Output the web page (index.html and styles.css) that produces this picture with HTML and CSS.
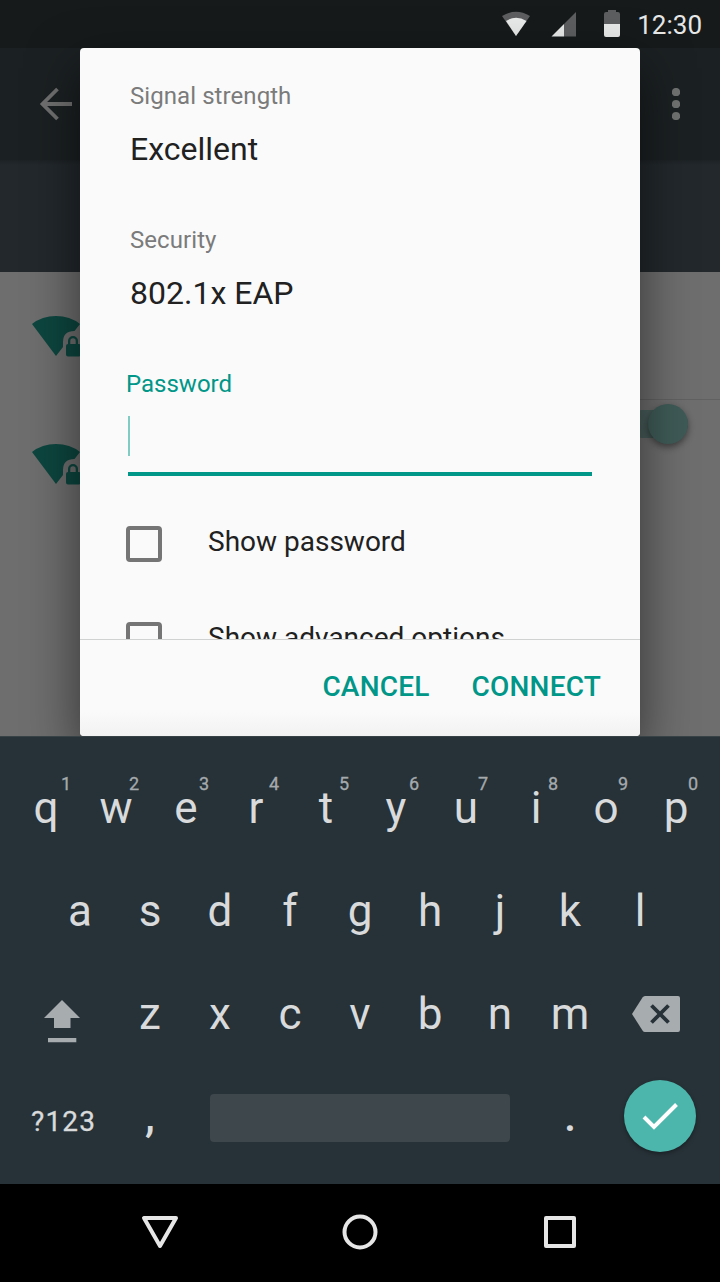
FILE: index.html
```html
<!DOCTYPE html>
<html lang="en">
<head>
<meta charset="utf-8">
<title>Wi-Fi</title>
<link rel="stylesheet" href="styles.css">
</head>
<body>
<div class="phone">
  <header class="status">
    <svg class="status-icons" width="136" height="32" viewBox="494 8 136 32">
      <path d="M502 16Q516 7.500 530 16L516 36Z" fill="#5c5e5f"/>
      <path d="M506 21Q516 14.500 526.500 21L516 36Z" fill="#e8e9e9"/>
      <path d="M564 24L576 12V36.500H564Z" fill="#5c5e5f"/>
      <path d="M564 24V36.500H551.500Z" fill="#e8e9e9"/>
      <path d="M608 10h8v2h2a2 2 0 0 1 2 2v10h-16V14a2 2 0 0 1 2-2h2Z" fill="#5c5e5f"/>
      <path d="M604 24h16v11a2 2 0 0 1-2 2h-12a2 2 0 0 1-2-2Z" fill="#e8e9e9"/>
    </svg>
    <span class="clock">12:30</span>
  </header>
  <main class="app">
    <div class="toolbar">
      <svg width="34" height="34" viewBox="39 87 34 34"><path d="M72 104H43M57.500 89L42.500 104L57.500 119" fill="none" stroke="#707070" stroke-width="3.800"/></svg>
      <svg width="8" height="32" viewBox="0 0 8 32" fill="#707272"><circle cx="4" cy="4" r="4.100"/><circle cx="4" cy="16" r="4.100"/><circle cx="4" cy="28" r="4.100"/></svg>
    </div>
    <div class="subheader"></div>
    <div class="networks">
      <div class="network">
        <svg width="52" height="42" viewBox="32 316 52 42" fill="#0d463f">
          <path d="M32 324Q42 316 56 316T80 324L74.500 331Q63 331 63 342V347L56 356Z"/>
          <path fill-rule="evenodd" d="M68 344V341a5 5 0 0 1 10 0V344h1a2 2 0 0 1 2 2v8.500a2 2 0 0 1-2 2H68a2 2 0 0 1-2-2V346a2 2 0 0 1 2-2ZM70.300 344h5.400V341a2.700 2.700 0 0 0-5.400 0Z"/>
        </svg>
      </div>
      <div class="divider"></div>
      <div class="network">
        <svg width="52" height="42" viewBox="32 316 52 42" fill="#0d463f">
          <path d="M32 324Q42 316 56 316T80 324L74.500 331Q63 331 63 342V347L56 356Z"/>
          <path fill-rule="evenodd" d="M68 344V341a5 5 0 0 1 10 0V344h1a2 2 0 0 1 2 2v8.500a2 2 0 0 1-2 2H68a2 2 0 0 1-2-2V346a2 2 0 0 1 2-2ZM70.300 344h5.400V341a2.700 2.700 0 0 0-5.400 0Z"/>
        </svg>
        <div class="switch"><div class="thumb"></div></div>
      </div>
    </div>
  </main>
  <section class="dialog">
    <div class="scroll">
      <div class="label">Signal strength</div>
      <div class="value">Excellent</div>
      <div class="label">Security</div>
      <div class="value">802.1x EAP</div>
      <div class="label active">Password</div>
      <div class="field"><div class="caret"></div></div>
      <div class="check"><i class="box"></i><span>Show password</span></div>
      <div class="check"><i class="box"></i><span>Show advanced options</span></div>
    </div>
    <div class="actions"><span>CANCEL</span><span>CONNECT</span></div>
  </section>
  <section class="keyboard">
    <div class="row first">
      <div class="key">q<sup>1</sup></div><div class="key">w<sup>2</sup></div><div class="key">e<sup>3</sup></div><div class="key">r<sup>4</sup></div><div class="key">t<sup>5</sup></div><div class="key">y<sup>6</sup></div><div class="key">u<sup>7</sup></div><div class="key">i<sup>8</sup></div><div class="key">o<sup>9</sup></div><div class="key">p<sup>0</sup></div>
    </div>
    <div class="row second">
      <div class="key">a</div><div class="key">s</div><div class="key">d</div><div class="key">f</div><div class="key">g</div><div class="key">h</div><div class="key">j</div><div class="key">k</div><div class="key">l</div>
    </div>
    <div class="row third">
      <svg class="shift" width="36" height="43" viewBox="44 1000 36 43" fill="#a7acaf"><path d="M62 1000L80 1018H70.500V1028H54V1018H44ZM48 1038H76.300V1042.300H48Z"/></svg>
      <div class="key">z</div><div class="key">x</div><div class="key">c</div><div class="key">v</div><div class="key">b</div><div class="key">n</div><div class="key">m</div>
      <svg class="delete" width="48" height="36" viewBox="632 996 48 36"><path d="M645 996H678Q680 996 680 998V1030Q680 1032 678 1032H645Q643.500 1032 642.500 1030.500L632 1014L642.500 997.500Q643.500 996 645 996Z" fill="#a7acaf"/><path d="M651.500 1005.500L668.500 1022.500M668.500 1005.500L651.500 1022.500" stroke="#273238" stroke-width="3.800"/></svg>
    </div>
    <div class="row fourth">
      <div class="symbols">?123</div>
      <div class="key punct">,</div>
      <div class="space"></div>
      <div class="key punct">.</div>
      <div class="enter"><svg width="36" height="28" viewBox="642 1102 36 28"><path d="M644 1117L654 1127L676.500 1104.500" fill="none" stroke="#fff" stroke-width="4"/></svg></div>
    </div>
  </section>
  <nav class="nav">
    <svg width="40" height="40" viewBox="140 1212 40 40"><path d="M144 1218H176L160 1246Z" fill="none" stroke="#e6e6e6" stroke-width="4" stroke-linejoin="round"/></svg>
    <svg width="40" height="40" viewBox="0 0 40 40"><circle cx="20" cy="20" r="15.500" fill="none" stroke="#e6e6e6" stroke-width="4"/></svg>
    <svg width="40" height="40" viewBox="0 0 40 40"><rect x="6" y="6" width="28" height="28" fill="none" stroke="#e6e6e6" stroke-width="4" stroke-linejoin="round"/></svg>
  </nav>
</div>
</body>
</html>
```

FILE: styles.css
```css
* { box-sizing: border-box; }
body { margin: 0; background: #000; font-family: Roboto, sans-serif; }
svg { display: block; flex: none; }
.phone { position: relative; width: 720px; height: 1282px; overflow: hidden; display: flex; flex-direction: column; }
.status { height: 48px; flex: none; background: #161a1b; display: flex; align-items: center; justify-content: flex-end; padding-right: 18px; gap: 7px; color: #e6e7e7; font-size: 26px; }
.clock { line-height: 46px; padding-top: 2px; }
.app { height: 688px; flex: none; display: flex; flex-direction: column; }
.toolbar { height: 112px; background: #1b2022; display: flex; align-items: center; justify-content: space-between; padding: 0 40px 0 39px; }
.subheader { height: 112px; background: linear-gradient(#1d2225, #22282c 5px); }
.networks { flex: 1; background: #6e6e6e; }
.network { height: 127px; padding: 44px 32px 0; display: flex; justify-content: space-between; }
.divider { height: 1px; margin-left: 144px; background: #616161; }
.divider + .network { height: 128px; }
.switch { width: 60px; height: 28px; margin-top: -34px; background: #4b605d; border-radius: 14px; display: flex; align-items: center; justify-content: flex-end; }
.thumb { width: 40px; height: 40px; border-radius: 50%; background: #3f5b57; box-shadow: 0 3px 7px rgba(0,0,0,.45); }
.dialog { position: absolute; left: 80px; top: 48px; width: 560px; height: 688px; border-radius: 4px; background: #fafafa; box-shadow: 0 20px 52px rgba(0,0,0,.55); display: flex; flex-direction: column; }
.scroll { height: 592px; padding: 32px 46px 0; overflow: hidden; border-bottom: 1px solid #d0d1d1; }
.label { height: 32px; line-height: 32px; font-size: 24px; color: #7b7b7b; padding-left: 4px; letter-spacing: .07px; }
.value { height: 112px; padding-top: 17px; line-height: 40px; font-size: 32px; color: #212121; padding-left: 4px; }
.active { color: #009688; padding-left: 0; letter-spacing: 0; }
.field { height: 76px; margin: 0 2px; border-bottom: 4px solid #009688; padding-top: 16px; }
.caret { width: 2px; height: 40px; background: #80cbc4; }
.check { height: 96px; display: flex; align-items: center; gap: 46px; color: #212121; font-size: 28px; }
.field + .check { margin-top: 20px; }
.check span { padding-bottom: 5px; }
.box { width: 36px; height: 36px; border: 4px solid #757575; border-radius: 4px; }
.actions { flex: 1; display: flex; justify-content: flex-end; align-items: center; gap: 42px; padding: 0 39px 4px 0; font-size: 28px; font-weight: 500; letter-spacing: .2px; color: #009688; border-radius: 0 0 4px 4px; background: linear-gradient(#fafafa 75%, #f2f2f2); }
.keyboard { position: relative; height: 448px; flex: none; background: #273238; border-top: 1px solid #374247; display: flex; flex-direction: column; padding-top: 19px; color: #d8dadb; font-size: 44px; }
.row { height: 103px; flex: none; display: flex; align-items: center; }
.key { width: 70px; text-align: center; position: relative; line-height: 52px; }
.key sup { position: absolute; left: 45px; top: -8px; width: 16px; font-size: 18px; line-height: 20px; color: #a5aaad; font-weight: 400; -webkit-text-stroke: .3px #a5aaad; }
.key:first-child sup { left: 47px; }
.key:nth-child(n+7) sup { left: 44px; }
.first { padding-left: 11px; }
.second { padding-left: 45px; }
.third { padding-left: 44px; }
.shift { margin: 16px 35px 0 0; }
.delete { margin-left: 27px; }
.fourth { padding-left: 31px; }
.symbols { width: 84px; font-size: 28px; font-weight: 400; letter-spacing: 1.2px; padding-top: 9px; -webkit-text-stroke: .3px #d8dadb; }
.space { width: 300px; height: 48px; margin: 2px 25px 0; border-radius: 4px; background: #3d474c; }
.punct { font-weight: 500; padding-bottom: 2px; }
.enter { width: 72px; height: 72px; margin: -2px 0 0 19px; border-radius: 50%; background: #4db6ac; box-shadow: 0 2px 4px rgba(0,0,0,.35); display: grid; place-items: center; }
.nav { height: 98px; padding: 28px 140px 30px; display: flex; justify-content: space-between; align-items: center; background: #000; }
```
